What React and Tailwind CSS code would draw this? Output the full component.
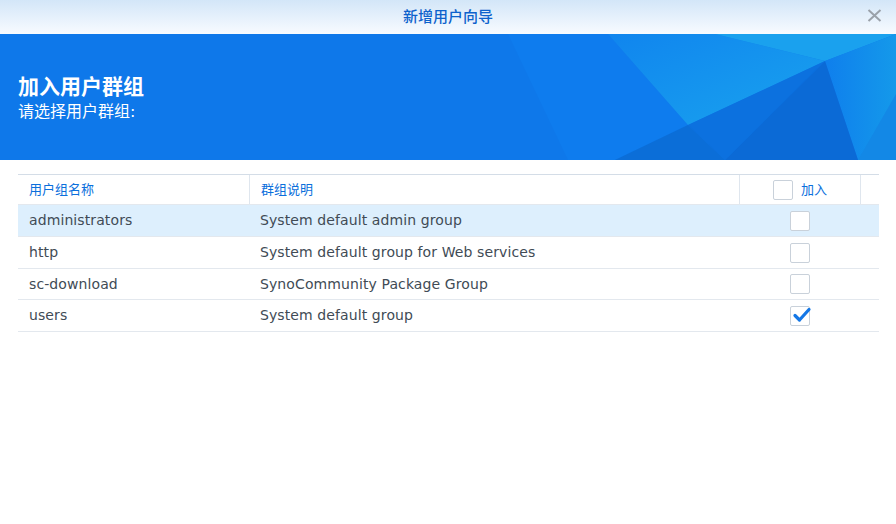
import React from "react";

const rows = [
  { name: "administrators", desc: "System default admin group", checked: false, active: true, h: "h-[32px]" },
  { name: "http", desc: "System default group for Web services", checked: false, h: "h-[32px]" },
  { name: "sc-download", desc: "SynoCommunity Package Group", checked: false, h: "h-[31px]" },
  { name: "users", desc: "System default group", checked: true, h: "h-[32px]" },
];

function Box({ checked }) {
  return (
    <div className="relative w-[20px] h-[20px] border border-[#c9d1da] rounded-[2px] bg-white">
      {checked && (
        <svg className="absolute left-[1px] top-[-1px]" width="20" height="18" viewBox="0 0 20 18">
          <path d="M3 9.5 L7.5 14 L17 3.5" fill="none" stroke="#1477e6" strokeWidth="3.2" strokeLinecap="round" strokeLinejoin="round" />
        </svg>
      )}
    </div>
  );
}

export default function App() {
  return (
    <div
      className="w-[896px] h-[524px] bg-white overflow-hidden flex flex-col"
      style={{ fontFamily: '"DejaVu Sans", "Noto Sans CJK SC", sans-serif' }}
    >
      {/* title bar */}
      <div className="relative h-[34px] flex items-center justify-center bg-gradient-to-b from-[#d3e6f8] to-[#f8fbff]">
        <span className="text-[15px] font-medium text-[#0d62cc]">新增用户向导</span>
        <svg className="absolute right-[14px] top-[9px]" width="15" height="13" viewBox="0 0 15 13">
          <path d="M1.5 1 L13.5 12 M13.5 1 L1.5 12" stroke="#9aa1a9" strokeWidth="2" />
        </svg>
      </div>

      {/* banner */}
      <div className="relative h-[126px] bg-[#0e78ea] overflow-hidden">
        <svg className="absolute inset-0" width="896" height="126" viewBox="0 0 896 126">
          <defs>
            <linearGradient id="g1" x1="0" y1="0" x2="1" y2="1">
              <stop offset="0" stopColor="#1085ee" />
              <stop offset="1" stopColor="#19a3ee" />
            </linearGradient>
            <linearGradient id="g2" x1="0" y1="0" x2="1" y2="0">
              <stop offset="0" stopColor="#0f7fed" />
              <stop offset="1" stopColor="#1499ea" />
            </linearGradient>
          </defs>
          <polygon points="508,0 608,0 688,91 615,126 568,126" fill="#0f7ff0" opacity="0.6" />
          <polygon points="608,0 715,0 825,27 688,91" fill="url(#g1)" />
          <polygon points="715,0 896,0 825,27" fill="#1aa1ee" />
          <polygon points="825,27 896,0 896,126 858,126" fill="url(#g2)" />
          <polygon points="688,91 825,27 725,126" fill="#0c71df" />
          <polygon points="825,27 858,126 725,126" fill="#0b6ad6" />
          <polygon points="688,91 725,126 615,126" fill="#0b6ed8" />
          <polygon points="858,126 896,60 896,126" fill="#1388e6" />
        </svg>
        <div className="relative pl-[18px] pt-[41px]">
          <div className="text-[21px] leading-[25px] font-bold text-white">加入用户群组</div>
          <div className="text-[16px] leading-[22px] mt-[1px] text-white">请选择用户群组:</div>
        </div>
      </div>

      {/* table */}
      <div className="pt-[14px] pl-[18px] pr-[17px]">
        <div className="border-t border-[#d4dde7]">
          <div className="flex h-[29px] text-[13px] text-[#0b6fdc]">
            <div className="w-[231px] pl-[11px] flex items-center">用户组名称</div>
            <div className="w-[490px] pl-[11px] flex items-center border-l border-[#dfe6ee]">群组说明</div>
            <div className="w-[121px] flex items-center justify-center gap-[8px] border-l border-[#dfe6ee]">
              <Box />
              <span>加入</span>
            </div>
            <div className="flex-1 border-l border-[#dfe6ee]" />
          </div>
          {rows.map((r) => (
            <div
              key={r.name}
              className={`flex ${r.h} border-t border-[#e3e8ee] text-[14px] tracking-[0.1px] text-[#414b55] ${r.active ? "bg-[#ddeffd]" : ""}`}
            >
              <div className="w-[231px] pl-[11px] flex items-center">{r.name}</div>
              <div className="w-[491px] pl-[11px] flex items-center">{r.desc}</div>
              <div className="w-[119px] flex items-center justify-center">
                <Box checked={r.checked} />
              </div>
            </div>
          ))}
          <div className="border-t border-[#e3e8ee]" />
        </div>
      </div>
    </div>
  );
}
